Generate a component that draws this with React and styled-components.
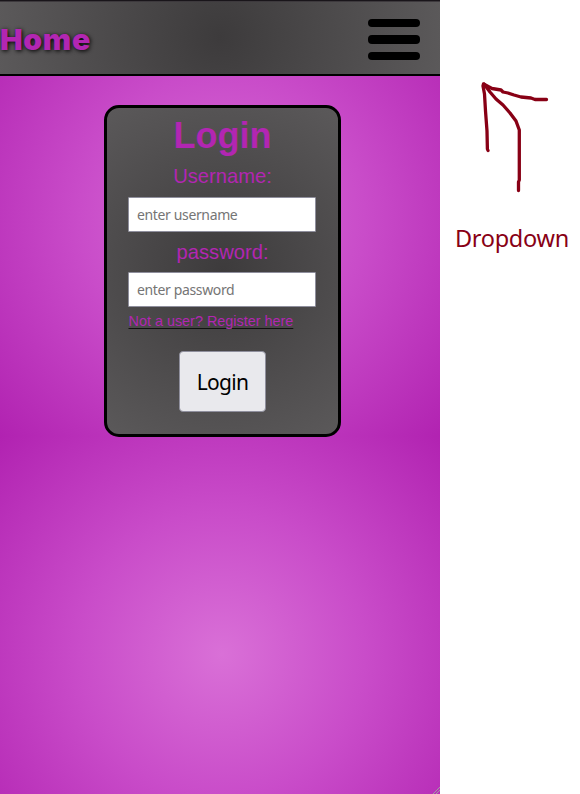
import React from "react";
import styled, { createGlobalStyle } from "styled-components";

const PURPLE = "#b226b2";
const INK = "#880015";

const GlobalStyle = createGlobalStyle`
  *, *::before, *::after { box-sizing: border-box; }
  body { margin: 0; background: #fff; font-family: "Liberation Sans", Arial, sans-serif; }
`;

const Layout = styled.div`
  display: grid;
  grid-template-columns: 440px 140px;
  height: 794px;
  overflow: hidden;
`;

const Phone = styled.div`
  position: relative;
  display: flex;
  flex-direction: column;
  align-items: center;
  background: radial-gradient(circle, #d970d7, #c94cc9 46%, #b122b1) 0 0 / 444px 436px;
`;

const Header = styled.header`
  display: flex;
  align-items: center;
  justify-content: space-between;
  width: 100%;
  height: 76px;
  padding: 4px 20px 0 0;
  border-bottom: 2px solid #000;
  background: radial-gradient(circle, #3d3b3c, #5b595a);
  box-shadow: inset 0 1px 0 #19151a, inset 0 2px 0 #3d393d;
`;

const Brand = styled.a`
  color: ${PURPLE};
  font: 900 28.5px/38px Inter, "Arial Black", sans-serif;
  letter-spacing: 0.6px;
  text-shadow: 1px 1px 4px #000;
  padding-top: 2px;
  transform: scaleX(1.06);
  transform-origin: left;
`;

const MenuButton = styled.button`
  display: grid;
  grid-template-rows: 8px 9px 8px;
  gap: 8px;
  width: 52px;
  padding: 0;
  border: 0;
  background: none;
`;

const Bar = styled.span`
  border-radius: 4px;
  background: #000;
`;

const Card = styled.form`
  display: flex;
  flex-direction: column;
  align-items: center;
  width: 237px;
  height: 332px;
  margin: 29px 0 0 5px;
  padding: 7px 21px 0;
  border: 3px solid #000;
  border-radius: 15px;
  background: radial-gradient(circle, #3d3b3c, #5b595a);
  color: ${PURPLE};
`;

const Title = styled.h1`
  margin: 0;
  font-size: 36px;
  line-height: 42px;
`;

const Label = styled.label`
  font-size: 20.2px;
  line-height: 24px;
  margin-top: ${(p) => p.$gap}px;
`;

const Field = styled.input`
  width: 188px;
  height: 35px;
  flex: none;
  margin: ${(p) => p.$gap}px 1px 0 0;
  padding: 0 8px;
  border: 1px solid #8f8f9d;
  border-radius: 1px;
  background: #fff;
  font: 14px "Noto Sans", sans-serif;
  letter-spacing: -0.36px;
  &::placeholder { color: #757575; opacity: 1; }
`;

const RegisterLink = styled.a`
  align-self: flex-start;
  margin: 6px 0 0 0.5px;
  font-size: 14.4px;
  line-height: 16px;
  white-space: nowrap;
  text-decoration: underline #111 1px;
  text-underline-offset: 2px;
`;

const Submit = styled.button`
  width: 87px;
  height: 61px;
  margin-top: 22px;
  padding: 0;
  border: 1px solid #8f8f9d;
  border-radius: 4px;
  background: #e9e9ed;
  color: #000;
  font: 21px "Noto Sans", sans-serif;
  letter-spacing: -0.7px;
`;

const Grip = styled.svg`
  position: absolute;
  right: 0;
  bottom: 0;
`;

const Notes = styled.aside`
  display: flex;
  flex-direction: column;
  padding-top: 76px;
  color: ${INK};
`;

const NoteText = styled.p`
  margin: 16px 0 0 15px;
  font: 23.5px/32px "Noto Sans", sans-serif;
  letter-spacing: -0.3px;
`;

export default function App() {
  return (
    <>
      <GlobalStyle />
      <Layout>
        <Phone>
          <Header>
            <Brand>Home</Brand>
            <MenuButton type="button" aria-label="Menu">
              <Bar />
              <Bar />
              <Bar />
            </MenuButton>
          </Header>
          <Card>
            <Title>Login</Title>
            <Label $gap={7} htmlFor="username">Username:</Label>
            <Field $gap={9} id="username" placeholder="enter username" />
            <Label $gap={8} htmlFor="password">password:</Label>
            <Field $gap={8} id="password" type="password" placeholder="enter password" />
            <RegisterLink>Not a user? Register here</RegisterLink>
            <Submit type="button">Login</Submit>
          </Card>
          <Grip width="7" height="7" viewBox="0 0 7 7" stroke="#a0a0a0" strokeWidth="1">
            <path d="M0 7L7 0M3 7L7 3" />
          </Grip>
        </Phone>
        <Notes>
          <svg width="140" height="130" viewBox="440 76 140 130" fill="none" stroke={INK} strokeWidth="3.3" strokeLinecap="round" strokeLinejoin="round">
            <path d="M488 150.5L487.4 149L487 131L485.5 111L484.5 94L483 86L483.5 84L492 88.5L501 90L503 92L508 93L514 95L521 97L531 98L535 99.5L546.5 99.5" />
            <path d="M484 84L490 92L496 99L503 105L510 113L516 121L519.3 130V180L518.5 182V190.5" />
          </svg>
          <NoteText>Dropdown</NoteText>
        </Notes>
      </Layout>
    </>
  );
}
